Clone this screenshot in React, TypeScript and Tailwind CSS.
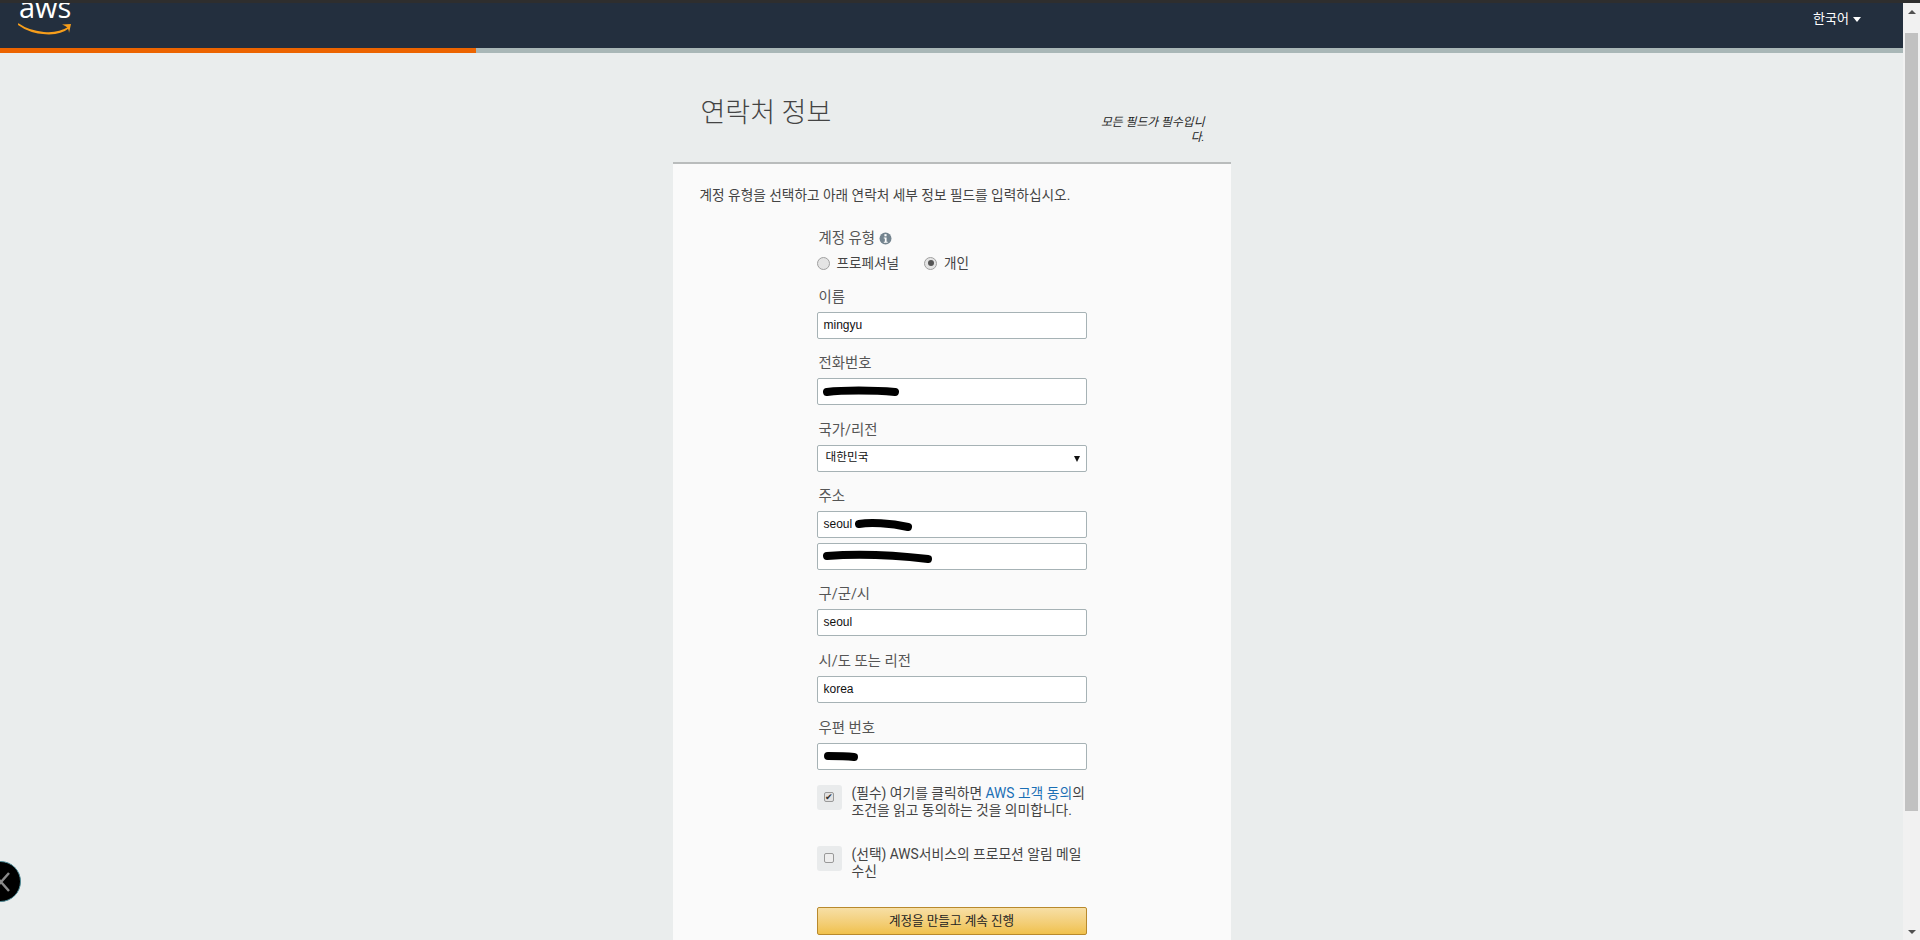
const KR = "font-['Roboto','Noto_Sans_CJK_KR',sans-serif]";

function Scribble({ d, w, h = 16 }: { d: string; w: number; h?: number }) {
  return (
    <svg width={w} height={h} viewBox={`0 0 ${w} ${h}`} className="absolute top-[5px]" style={{ left: 5 }}>
      <path d={d} fill="none" stroke="#000" strokeWidth="8" strokeLinecap="round" strokeLinejoin="round" />
    </svg>
  );
}

function Field({ label, value, children, mt = "mt-[15px]" }: { label?: string; value?: string; children?: React.ReactNode; mt?: string }) {
  return (
    <div>
      {label && <div className={`${mt} h-[20px] pl-[2px] text-[14.4px] leading-[20px] text-[#555]`}>{label}</div>}
      <div className="relative mt-[4px] flex h-[27px] w-[270px] items-center rounded-[2px] border border-[#a6b2b5] bg-white px-[6px] font-['Liberation_Sans'] text-[12px] text-[#111]">
        {value}
        {children}
      </div>
    </div>
  );
}

export default function App() {
  return (
    <div className={`flex h-[940px] w-[1920px] flex-col overflow-hidden bg-[#eaeded] ${KR}`}>
      <div className="h-[3px] w-full shrink-0 bg-[#2e2e2e]" />
      <div className="flex min-h-0 flex-1">
        <main className="min-w-0 flex-1">
          <header className="relative flex h-[45px] items-start justify-between overflow-hidden bg-[#232f3e]">
            <div className="relative ml-[18px] h-[34px] w-[56px]">
              <span className="absolute left-[1px] top-[-13px] font-['Open_Sans'] text-[29px] font-medium leading-[34px] text-white">aws</span>
              <svg width="56" height="14" viewBox="0 0 56 14" className="absolute left-0 top-[20px]">
                <path d="M0 1 C14 11 38 13 50 5 C41 13 16 13 0 1Z" fill="#f79e1b" stroke="#f79e1b" strokeWidth="1.6" />
                <path d="M44 1.5 L53 1 L51 10 C51 6 49 3 44 1.5Z" fill="#f79e1b" />
              </svg>
            </div>
            <div className="mr-[42px] mt-[6px] flex items-center text-[13px] leading-[20px] text-white">
              한국어
              <span className="ml-[4px] mt-[1px] h-0 w-0 border-x-[4.5px] border-t-[5px] border-x-transparent border-t-white" />
            </div>
          </header>
          <div className="h-[5px] bg-[#a9b7b7]">
            <div className="h-full w-[476px] bg-[#ec6400]" />
          </div>

          <div className="mx-auto w-[558px]">
            <div className="relative h-[111px] border-b-2 border-[#b9bcbc]">
              <h1 className="absolute left-[28px] top-[40px] text-[27px] font-light leading-[40px] text-[#444]">연락처 정보</h1>
              <p className="absolute right-[26px] top-[62px] w-[110px] text-right text-[11.8px] italic leading-[15px] text-[#222]">모든 필드가 필수입니다.</p>
            </div>
            <div className="h-[800px] bg-[#fafafa]">
              <p className="pl-[27px] pt-[22px] text-[13.7px] leading-[18px] text-[#444]">계정 유형을 선택하고 아래 연락처 세부 정보 필드를 입력하십시오.</p>
              <div className="ml-[144px] w-[270px]">
                <div className="mt-[24.5px] flex h-[20px] items-center pl-[2px] text-[14.4px] text-[#555]">
                  계정 유형
                  <svg width="13" height="13" viewBox="0 0 12 12" className="ml-[4px]">
                    <circle cx="6" cy="6" r="5.5" fill="#74848f" />
                    <rect x="5" y="2" width="2" height="2" fill="#fff" />
                    <path d="M4.4 5h2.6v4h1v1H4.4V9h1V6h-1z" fill="#fff" />
                  </svg>
                </div>
                <div className="mt-[5.5px] flex h-[18px] items-center text-[13.6px] text-[#444]">
                  <span className="h-[13px] w-[13px] rounded-full border border-[#a0a0a0] bg-[#e4e4e4]" />
                  <span className="ml-[7px]">프로페셔널</span>
                  <span className="ml-[25px] flex h-[13px] w-[13px] items-center justify-center rounded-full border border-[#a0a0a0] bg-[#e4e4e4]">
                    <span className="h-[6px] w-[6px] rounded-full bg-[#555]" />
                  </span>
                  <span className="ml-[7px]">개인</span>
                </div>

                <Field label="이름" value="mingyu" mt="mt-[15.5px]" />
                <Field label="전화번호">
                  <Scribble w={76} d="M4 8 C20 6 50 6 72 8" />
                </Field>
                <Field label="국가/리전" mt="mt-[16px]">
                  <span className={`ml-[2px] text-[11.7px] ${KR}`}>대한민국</span>
                  <span className="absolute right-[6px] top-[10px] h-0 w-0 border-x-[3.5px] border-t-[6px] border-x-transparent border-t-[#111]" />
                </Field>
                <Field label="주소" value="seoul">
                  <svg width="60" height="16" viewBox="0 0 60 16" className="absolute left-[37px] top-[5px]">
                    <path d="M4 7 C15 5 35 6 53 10" fill="none" stroke="#000" strokeWidth="8" strokeLinecap="round" />
                  </svg>
                </Field>
                <div className="relative mt-[5px] h-[27px] w-[270px] rounded-[2px] border border-[#a6b2b5] bg-white">
                  <Scribble w={110} d="M4 7 C30 5 70 6 105 10" />
                </div>
                <Field label="구/군/시" value="seoul" />
                <Field label="시/도 또는 리전" value="korea" mt="mt-[16px]" />
                <Field label="우편 번호" mt="mt-[16px]">
                  <Scribble w={36} d="M5 7 C12 7 22 7 31 8" />
                </Field>

                <div className="mt-[15px] flex">
                  <div className="flex h-[25px] w-[25px] shrink-0 items-center justify-center rounded-[3px] bg-[#e9ebec]">
                    <span className="flex h-[10px] w-[10px] items-center justify-center rounded-[2px] border border-[#999] bg-[#e2e2e2] text-[9px] leading-none text-[#333]">✔</span>
                  </div>
                  <p className="ml-[10px] text-[13.8px] leading-[17px] text-[#444]">
                    (필수) 여기를 클릭하면 <span className="text-[#1a6fb5]">AWS 고객 동의</span>의 조건을 읽고 동의하는 것을 의미합니다.
                  </p>
                </div>
                <div className="mt-[27px] flex">
                  <div className="flex h-[25px] w-[25px] shrink-0 items-center justify-center rounded-[3px] bg-[#e9ebec]">
                    <span className="h-[10px] w-[10px] rounded-[2px] border border-[#999] bg-[#eee]" />
                  </div>
                  <p className="ml-[10px] text-[13.8px] leading-[17px] text-[#444]">(선택) AWS서비스의 프로모션 알림 메일 수신</p>
                </div>
                <button className="mt-[27.5px] h-[28px] w-[270px] rounded-[2px] border border-[#b8892c] bg-gradient-to-b from-[#f7dfa5] to-[#f0c14b] text-[12.6px] text-[#222]">
                  계정을 만들고 계속 진행
                </button>
              </div>
            </div>
          </div>
        </main>
        <div className="flex w-[17px] shrink-0 flex-col items-center bg-[#f1f1f1]">
          <div className="flex h-[17px] items-center justify-center">
            <span className="h-0 w-0 border-x-[4px] border-b-[4px] border-x-transparent border-b-[#505050]" />
          </div>
          <div className="mt-[13px] h-[778px] w-[13px] bg-[#c1c1c1]" />
          <div className="flex-1" />
          <div className="flex h-[17px] items-center justify-center">
            <span className="h-0 w-0 border-x-[4px] border-t-[4px] border-x-transparent border-t-[#505050]" />
          </div>
        </div>
      </div>
      <div className="fixed left-[-20px] top-[861px] flex h-[41px] w-[41px] items-center justify-center rounded-full border border-[#4d8a96] bg-black">
        <svg width="24" height="24" viewBox="0 0 24 24">
          <path d="M4 3 L20 21 M20 3 L4 21" fill="none" stroke="#8a8a8a" strokeWidth="2.5" />
        </svg>
      </div>
    </div>
  );
}
